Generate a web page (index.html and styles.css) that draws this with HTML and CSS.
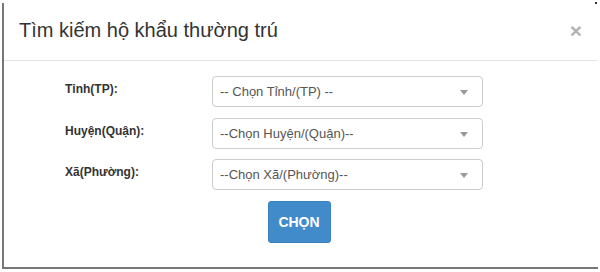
FILE: index.html
```html
<!DOCTYPE html>
<html lang="vi">
<head>
<meta charset="utf-8">
<title>Tìm kiếm hộ khẩu thường trú</title>
<link rel="stylesheet" href="styles.css">
</head>
<body>
<div class="frame">
  <div class="modal">
    <div class="modal-header">
      <h4 class="modal-title">Tìm kiếm hộ khẩu thường trú</h4>
      <span class="close">×</span>
    </div>
    <div class="modal-body">
      <div class="form">
        <label class="label">Tỉnh(TP):</label>
        <div class="select"><span>-- Chọn Tỉnh/(TP) --</span><i class="caret"></i></div>
        <label class="label">Huyện(Quận):</label>
        <div class="select"><span>--Chọn Huyện/(Quận)--</span><i class="caret"></i></div>
        <label class="label">Xã(Phường):</label>
        <div class="select"><span>--Chọn Xã/(Phường)--</span><i class="caret"></i></div>
      </div>
      <div class="actions">
        <button class="btn">CHỌN</button>
      </div>
    </div>
  </div>
</div>
</body>
</html>
```
FILE: styles.css
```css
html, body {
  margin: 0;
  padding: 0;
  background: #fff;
}
body {
  width: 600px;
  height: 272px;
  overflow: hidden;
  font-family: "Liberation Sans", Arial, sans-serif;
  color: #333;
}
.frame {
  position: relative;
  margin: 3px 0 0 2px;
  width: 594px;
  height: 264px;
  border-left: 2px solid #777;
  border-bottom: 2px solid #777;
}
.frame::after {
  content: "";
  position: absolute;
  right: 1px;
  top: -1px;
  width: 2px;
  height: 2px;
  background: #333;
}
.modal {
  display: flex;
  flex-direction: column;
}
.modal-header {
  display: flex;
  align-items: center;
  justify-content: space-between;
  padding: 13px 15px 15px 15px;
  border-bottom: 1px solid #e5e5e5;
}
.modal-title {
  margin: 0;
  font-size: 20px;
  font-weight: normal;
  line-height: 29px;
  color: #333;
}
.close {
  font-size: 21px;
  font-weight: bold;
  line-height: 1;
  color: #b3b3b3;
  margin-right: 1px;
  margin-top: -1px;
}
.modal-body {
  padding: 15px 0 0 0;
}
.form {
  display: grid;
  grid-template-columns: 148px 271px;
  row-gap: 10.5px;
  padding-left: 60px;
  align-items: center;
}
.label {
  font-size: 12px;
  font-weight: bold;
  color: #333;
  margin-bottom: 5px;
  padding-left: 1px;
}
.select {
  box-sizing: border-box;
  height: 31px;
  border: 1px solid #ccc;
  border-radius: 4px;
  display: flex;
  align-items: center;
  justify-content: space-between;
  padding: 0 14px 0 7px;
  font-size: 13px;
  color: #555;
  background: #fff;
}
.caret {
  display: block;
  width: 0;
  height: 0;
  border-left: 4.5px solid transparent;
  border-right: 4.5px solid transparent;
  border-top: 5px solid #999;
  margin-top: 2px;
}
.actions {
  display: flex;
  justify-content: center;
  padding-top: 11px;
  padding-right: 4px;
}
.btn {
  box-sizing: border-box;
  height: 42px;
  width: 63px;
  padding: 0;
  border: 1px solid #3a81c0;
  border-radius: 3px;
  background: #428bca;
  color: #fff;
  font-family: "Liberation Sans", Arial, sans-serif;
  font-size: 14px;
  font-weight: bold;
  line-height: 18px;
}
```
